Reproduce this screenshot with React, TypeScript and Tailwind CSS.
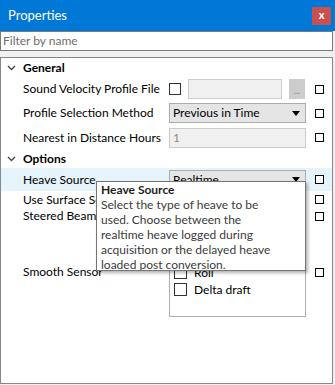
import React from 'react';

const font = { fontFamily: 'Lato, "Open Sans", sans-serif' };

const SmallBox = () => <div className="w-[9px] h-[9px] border border-black bg-white" />;

const Caret = () => (
  <svg width="8" height="5" viewBox="0 0 8 5">
    <path d="M0 0 H8 L4 5 Z" fill="#000" />
  </svg>
);

const Chevron = () => (
  <svg width="9" height="6" viewBox="0 0 9 6" className="ml-[6px]">
    <path d="M1 1 L4.5 4.5 L8 1" fill="none" stroke="#444" strokeWidth="1.3" />
  </svg>
);

const Row: React.FC<{ label: string; h: string; highlight?: boolean; children?: React.ReactNode }> = ({
  label,
  h,
  highlight,
  children,
}) => (
  <div className={`flex items-center ${h} ${highlight ? 'bg-[#e5f3fb]' : ''}`}>
    <div className="w-[22px] shrink-0" />
    <div className="w-[146px] shrink-0 text-[12px] text-black whitespace-nowrap overflow-hidden">{label}</div>
    <div className="w-[137px] shrink-0 flex items-center">{children}</div>
    <div className="w-[26px] flex justify-center">
      <SmallBox />
    </div>
  </div>
);

const Header: React.FC<{ label: string; h: string }> = ({ label, h }) => (
  <div className={`flex items-center ${h}`}>
    <div className="w-[22px] shrink-0">
      <Chevron />
    </div>
    <div className="text-[12px] font-bold text-black">{label}</div>
  </div>
);

export default function App() {
  const sensors = ['Heave', 'Pitch', 'Roll', 'Delta draft'];
  const tip = [
    'Select the type of heave to be',
    'used. Choose between the',
    'realtime heave logged during',
    'acquisition or the delayed heave',
    'loaded post conversion.',
  ];
  return (
    <div className="w-[335px] h-[385px] bg-[#f0f0f0] overflow-hidden relative" style={font}>
      <div className="h-[31px] bg-[#0078d7] flex items-center justify-between pl-[8px] pr-[4px]">
        <span className="text-white text-[13px]">Properties</span>
        <div className="w-[19px] h-[18px] bg-[#c75050] flex items-center justify-center text-white text-[11px] font-bold leading-none pb-[2px]">
          x
        </div>
      </div>
      <div className="w-[333px] h-[20px] bg-white border border-[#7a7a7a] flex items-center pl-[2px] text-[12px] text-[#6d6d6d]">
        Filter by name
      </div>
      <div className="h-[6px]" />
      <div className="w-[333px] h-[327px] bg-white border border-[#828790] pt-[1px]">
        <Header label="General" h="h-[18px]" />
        <Row label="Sound Velocity Profile File" h="h-[24px]">
          <div className="w-[12px] h-[12px] border border-[#333] bg-white shrink-0" />
          <div className="ml-[7px] w-[94px] h-[20px] bg-[#f0f0f0] border border-[#cccccc]" />
          <div className="ml-[7px] w-[16px] h-[20px] bg-[#cccccc] flex items-end justify-center pb-[4px] text-[9px] text-[#8a8a8a] leading-none">
            ...
          </div>
        </Row>
        <Row label="Profile Selection Method" h="h-[24px]">
          <div className="w-[137px] h-[20px] bg-[#e5e5e5] border border-[#acacac] flex items-center justify-between pl-[3px] pr-[5px] text-[12px]">
            <span>Previous in Time</span>
            <Caret />
          </div>
        </Row>
        <Row label="Nearest in Distance Hours" h="h-[25px]">
          <div className="w-[137px] h-[20px] bg-[#f0f0f0] border border-[#cccccc] flex items-center pl-[3px] text-[12px] text-[#8a8a8a]">
            1
          </div>
        </Row>
        <Header label="Options" h="h-[18px]" />
        <Row label="Heave Source" h="h-[23px]" highlight>
          <div className="w-[137px] h-[20px] bg-[#e5e5e5] border border-[#acacac] flex items-center justify-between pl-[3px] pr-[5px] text-[12px]">
            <span>Realtime</span>
            <Caret />
          </div>
        </Row>
        <Row label="Use Surface Sound Speed" h="h-[17px]" />
        <Row label="Steered Beams" h="h-[16px]" />
        <div className="flex h-[92px] mt-[2px]">
          <div className="w-[22px] shrink-0" />
          <div className="w-[146px] shrink-0 text-[12px] flex items-center">Smooth Sensor</div>
          <div className="w-[137px] h-[91px] border border-[#adadad] flex flex-col justify-end pb-[20px] pl-[4px] gap-[4px]">
            {sensors.map((s) => (
              <div key={s} className="flex items-center gap-[7px] h-[13px] text-[12px]">
                <div className="w-[13px] h-[13px] border border-[#333] bg-white" />
                <span>{s}</span>
              </div>
            ))}
          </div>
          <div className="w-[26px] flex justify-center items-center">
            <SmallBox />
          </div>
        </div>
      </div>

      {/* Tooltip */}
      <div className="absolute left-[96px] top-[181px] w-[210px] h-[90px] bg-white border border-[#767676] shadow-[2px_2px_3px_rgba(0,0,0,0.3)] px-[4px] text-[12px] leading-[15px] text-[#3b3b3b] whitespace-nowrap overflow-hidden">
        <div className="font-bold text-[#1e1e1e]">Heave Source</div>
        {tip.map((t) => (
          <div key={t}>{t}</div>
        ))}
      </div>
    </div>
  );
}
